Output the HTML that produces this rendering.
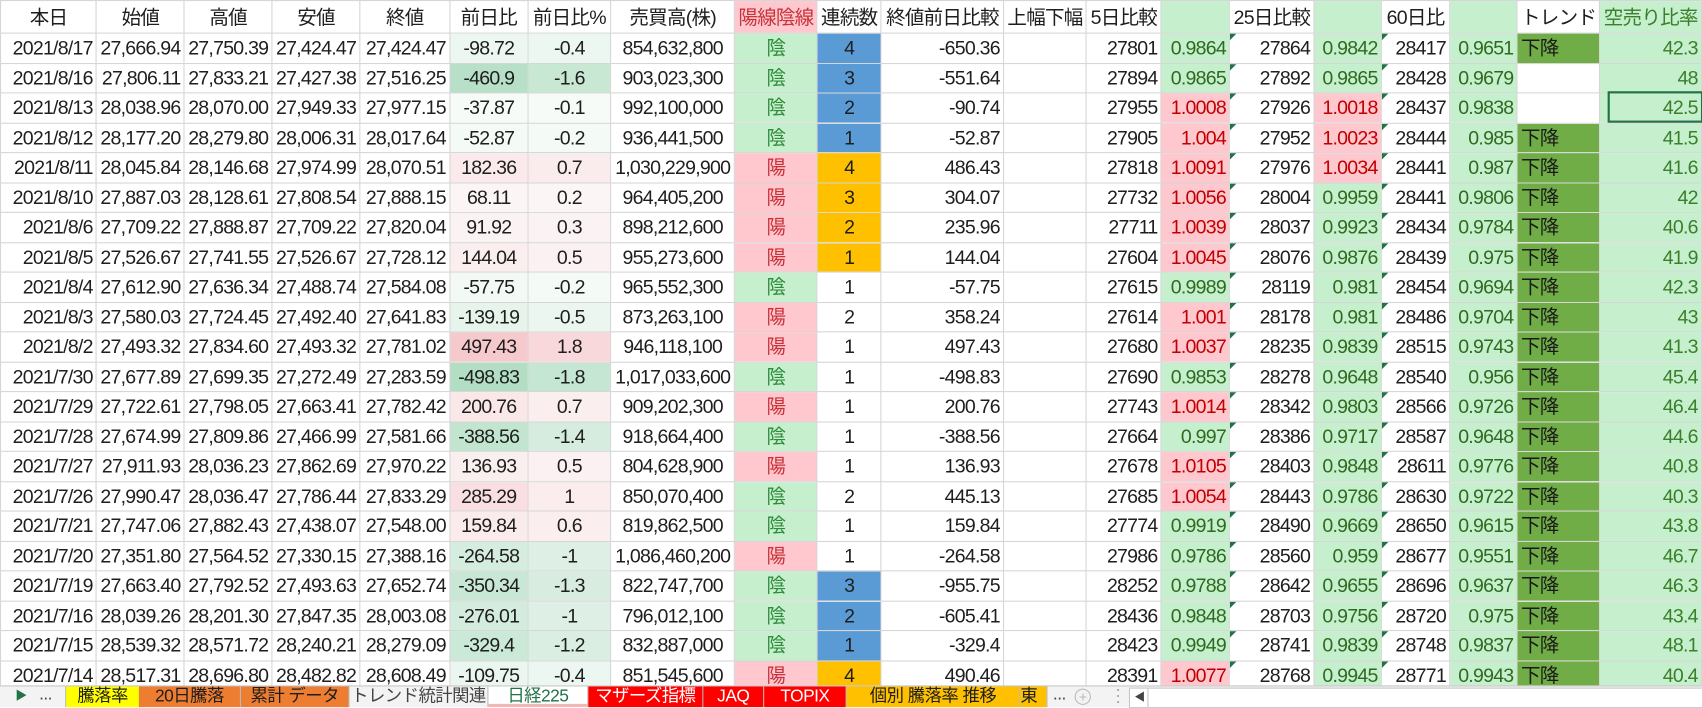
<!DOCTYPE html>
<html><head><meta charset="utf-8">
<style>
html,body{margin:0;padding:0;background:#fff;overflow:hidden;width:1702px;height:706px}
#w{position:absolute;left:0;top:0;width:1568px;height:650px;transform:scale(1.0855,1.0862);transform-origin:0 0;font-family:"Liberation Sans","Noto Sans CJK JP",sans-serif;color:#1e1e1e}
table{border-collapse:collapse;table-layout:fixed;position:absolute;left:0;top:0}
td{border:1px solid #d6d6d6;font-size:18px;letter-spacing:-0.7px;padding:0 3px;white-space:nowrap;overflow:hidden;text-align:right;height:26.5px;line-height:26px;position:relative}
tr.h td{height:29px;text-align:center;font-size:18px}
td.c{text-align:center}
td.l{text-align:left}
.g{background:#c6efce;color:#2f8a3b;text-align:center}
.p{background:#ffc7ce;color:#c8323a;text-align:center}
.b{background:#5b9bd5;text-align:center}
.o{background:#ffc000;text-align:center}
.lg{background:#c6efce;color:#2e6b1f}
.pk{background:#ffc7ce;color:#c00000}
.t{background:#70ad47;text-align:left;color:#1a1a1a}
.k{background:#c6efce;color:#3a7f2a}
.tr::before{content:"";position:absolute;left:0;top:0;border-top:6px solid #217346;border-right:6px solid transparent}
#sel{position:absolute;left:1481px;top:84px;width:84px;height:25px;border:2px solid #217346}
#tabs{position:absolute;left:0;top:631px;width:1568px;height:19px;background:#f3f3f3;border-top:1px solid #c6c6c6;font-size:16px;line-height:19px;letter-spacing:-0.5px}
.tb{position:absolute;top:0;height:19px;text-align:center;border-right:1px solid #bdbdbd;white-space:nowrap;overflow:hidden}
</style></head><body><div id="w">
<table>
<colgroup><col style="width:97px"><col style="width:81px"><col style="width:81px"><col style="width:81px"><col style="width:85px"><col style="width:82px"><col style="width:79px"><col style="width:115px"><col style="width:72px"><col style="width:52px"><col style="width:115px"><col style="width:71px"><col style="width:70px"><col style="width:69px"><col style="width:70px"><col style="width:67px"><col style="width:66px"><col style="width:67px"><col style="width:62px"><col style="width:86px"></colgroup>
<tr class="h"><td>本日</td><td>始値</td><td>高値</td><td>安値</td><td>終値</td><td>前日比</td><td>前日比%</td><td>売買高(株)</td><td style="background:#ffc7ce;color:#c8323a">陽線陰線</td><td>連続数</td><td class="l">終値前日比較</td><td class="l">上幅下幅</td><td class="l">5日比較</td><td style="background:#c6efce"></td><td class="l">25日比較</td><td style="background:#c6efce"></td><td class="l">60日比</td><td style="background:#c6efce"></td><td class="l">トレンド</td><td class="l" style="background:#c6efce;color:#3a7f2a">空売り比率</td></tr>
<tr><td>2021/8/17</td><td>27,666.94</td><td>27,750.39</td><td>27,424.47</td><td>27,424.47</td><td class="c" style="background:rgb(237,247,241)">-98.72</td><td class="c" style="background:rgb(237,247,241)">-0.4</td><td class="c">854,632,800</td><td class="g">陰</td><td class="b">4</td><td>-650.36</td><td></td><td>27801</td><td class="lg">0.9864</td><td class="tr">27864</td><td class="lg">0.9842</td><td class="tr">28417</td><td class="lg">0.9651</td><td class="t">下降</td><td class="k">42.3</td></tr>
<tr><td>2021/8/16</td><td>27,806.11</td><td>27,833.21</td><td>27,427.38</td><td>27,516.25</td><td class="c" style="background:rgb(184,224,200)">-460.9</td><td class="c" style="background:rgb(200,232,212)">-1.6</td><td class="c">903,023,300</td><td class="g">陰</td><td class="b">3</td><td>-551.64</td><td></td><td>27894</td><td class="lg">0.9865</td><td class="tr">27892</td><td class="lg">0.9865</td><td class="tr">28428</td><td class="lg">0.9679</td><td></td><td class="k">48</td></tr>
<tr><td>2021/8/13</td><td>28,038.96</td><td>28,070.00</td><td>27,949.33</td><td>27,977.15</td><td class="c" style="background:rgb(246,251,248)">-37.87</td><td class="c" style="background:rgb(246,251,248)">-0.1</td><td class="c">992,100,000</td><td class="g">陰</td><td class="b">2</td><td>-90.74</td><td></td><td>27955</td><td class="pk">1.0008</td><td class="tr">27926</td><td class="pk">1.0018</td><td class="tr">28437</td><td class="lg">0.9838</td><td></td><td class="k">42.5</td></tr>
<tr><td>2021/8/12</td><td>28,177.20</td><td>28,279.80</td><td>28,006.31</td><td>28,017.64</td><td class="c" style="background:rgb(244,250,246)">-52.87</td><td class="c" style="background:rgb(244,250,246)">-0.2</td><td class="c">936,441,500</td><td class="g">陰</td><td class="b">1</td><td>-52.87</td><td></td><td>27905</td><td class="pk">1.004</td><td class="tr">27952</td><td class="pk">1.0023</td><td class="tr">28444</td><td class="lg">0.985</td><td class="t">下降</td><td class="k">41.5</td></tr>
<tr><td>2021/8/11</td><td>28,045.84</td><td>28,146.68</td><td>27,974.99</td><td>28,070.51</td><td class="c" style="background:rgb(250,234,235)">182.36</td><td class="c" style="background:rgb(250,236,237)">0.7</td><td class="c">1,030,229,900</td><td class="p">陽</td><td class="o">4</td><td>486.43</td><td></td><td>27818</td><td class="pk">1.0091</td><td class="tr">27976</td><td class="pk">1.0034</td><td class="tr">28441</td><td class="lg">0.987</td><td class="t">下降</td><td class="k">41.6</td></tr>
<tr><td>2021/8/10</td><td>27,887.03</td><td>28,128.61</td><td>27,808.54</td><td>27,888.15</td><td class="c" style="background:rgb(251,246,245)">68.11</td><td class="c" style="background:rgb(251,246,245)">0.2</td><td class="c">964,405,200</td><td class="p">陽</td><td class="o">3</td><td>304.07</td><td></td><td>27732</td><td class="pk">1.0056</td><td class="tr">28004</td><td class="lg">0.9959</td><td class="tr">28441</td><td class="lg">0.9806</td><td class="t">下降</td><td class="k">42</td></tr>
<tr><td>2021/8/6</td><td>27,709.22</td><td>27,888.87</td><td>27,709.22</td><td>27,820.04</td><td class="c" style="background:rgb(251,243,243)">91.92</td><td class="c" style="background:rgb(251,243,243)">0.3</td><td class="c">898,212,600</td><td class="p">陽</td><td class="o">2</td><td>235.96</td><td></td><td>27711</td><td class="pk">1.0039</td><td class="tr">28037</td><td class="lg">0.9923</td><td class="tr">28434</td><td class="lg">0.9784</td><td class="t">下降</td><td class="k">40.6</td></tr>
<tr><td>2021/8/5</td><td>27,526.67</td><td>27,741.55</td><td>27,526.67</td><td>27,728.12</td><td class="c" style="background:rgb(250,238,238)">144.04</td><td class="c" style="background:rgb(251,241,242)">0.5</td><td class="c">955,273,600</td><td class="p">陽</td><td class="o">1</td><td>144.04</td><td></td><td>27604</td><td class="pk">1.0045</td><td class="tr">28076</td><td class="lg">0.9876</td><td class="tr">28439</td><td class="lg">0.975</td><td class="t">下降</td><td class="k">41.9</td></tr>
<tr><td>2021/8/4</td><td>27,612.90</td><td>27,636.34</td><td>27,488.74</td><td>27,584.08</td><td class="c" style="background:rgb(243,249,245)">-57.75</td><td class="c" style="background:rgb(244,250,246)">-0.2</td><td class="c">965,552,300</td><td class="g">陰</td><td class="c">1</td><td>-57.75</td><td></td><td>27615</td><td class="lg">0.9989</td><td class="tr">28119</td><td class="lg">0.981</td><td class="tr">28454</td><td class="lg">0.9694</td><td class="t">下降</td><td class="k">42.3</td></tr>
<tr><td>2021/8/3</td><td>27,580.03</td><td>27,724.45</td><td>27,492.40</td><td>27,641.83</td><td class="c" style="background:rgb(231,244,236)">-139.19</td><td class="c" style="background:rgb(236,246,240)">-0.5</td><td class="c">873,263,100</td><td class="p">陽</td><td class="c">2</td><td>358.24</td><td></td><td>27614</td><td class="pk">1.001</td><td class="tr">28178</td><td class="lg">0.981</td><td class="tr">28486</td><td class="lg">0.9704</td><td class="t">下降</td><td class="k">43</td></tr>
<tr><td>2021/8/2</td><td>27,493.32</td><td>27,834.60</td><td>27,493.32</td><td>27,781.02</td><td class="c" style="background:rgb(246,201,204)">497.43</td><td class="c" style="background:rgb(249,216,219)">1.8</td><td class="c">946,118,100</td><td class="p">陽</td><td class="c">1</td><td>497.43</td><td></td><td>27680</td><td class="pk">1.0037</td><td class="tr">28235</td><td class="lg">0.9839</td><td class="tr">28515</td><td class="lg">0.9743</td><td class="t">下降</td><td class="k">41.3</td></tr>
<tr><td>2021/7/30</td><td>27,677.89</td><td>27,699.35</td><td>27,272.49</td><td>27,283.59</td><td class="c" style="background:rgb(178,222,196)">-498.83</td><td class="c" style="background:rgb(196,230,210)">-1.8</td><td class="c">1,017,033,600</td><td class="g">陰</td><td class="c">1</td><td>-498.83</td><td></td><td>27690</td><td class="lg">0.9853</td><td class="tr">28278</td><td class="lg">0.9648</td><td class="tr">28540</td><td class="lg">0.956</td><td class="t">下降</td><td class="k">45.4</td></tr>
<tr><td>2021/7/29</td><td>27,722.61</td><td>27,798.05</td><td>27,663.41</td><td>27,782.42</td><td class="c" style="background:rgb(250,232,233)">200.76</td><td class="c" style="background:rgb(251,238,239)">0.7</td><td class="c">909,202,300</td><td class="p">陽</td><td class="c">1</td><td>200.76</td><td></td><td>27743</td><td class="pk">1.0014</td><td class="tr">28342</td><td class="lg">0.9803</td><td class="tr">28566</td><td class="lg">0.9726</td><td class="t">下降</td><td class="k">46.4</td></tr>
<tr><td>2021/7/28</td><td>27,674.99</td><td>27,809.86</td><td>27,466.99</td><td>27,581.66</td><td class="c" style="background:rgb(194,229,208)">-388.56</td><td class="c" style="background:rgb(214,236,222)">-1.4</td><td class="c">918,664,400</td><td class="g">陰</td><td class="c">1</td><td>-388.56</td><td></td><td>27664</td><td class="lg">0.997</td><td class="tr">28386</td><td class="lg">0.9717</td><td class="tr">28587</td><td class="lg">0.9648</td><td class="t">下降</td><td class="k">44.6</td></tr>
<tr><td>2021/7/27</td><td>27,911.93</td><td>28,036.23</td><td>27,862.69</td><td>27,970.22</td><td class="c" style="background:rgb(250,239,239)">136.93</td><td class="c" style="background:rgb(251,241,242)">0.5</td><td class="c">804,628,900</td><td class="p">陽</td><td class="c">1</td><td>136.93</td><td></td><td>27678</td><td class="pk">1.0105</td><td class="tr">28403</td><td class="lg">0.9848</td><td class="tr">28611</td><td class="lg">0.9776</td><td class="t">下降</td><td class="k">40.8</td></tr>
<tr><td>2021/7/26</td><td>27,990.47</td><td>28,036.47</td><td>27,786.44</td><td>27,833.29</td><td class="c" style="background:rgb(249,223,225)">285.29</td><td class="c" style="background:rgb(251,236,237)">1</td><td class="c">850,070,400</td><td class="g">陰</td><td class="c">2</td><td>445.13</td><td></td><td>27685</td><td class="pk">1.0054</td><td class="tr">28443</td><td class="lg">0.9786</td><td class="tr">28630</td><td class="lg">0.9722</td><td class="t">下降</td><td class="k">40.3</td></tr>
<tr><td>2021/7/21</td><td>27,747.06</td><td>27,882.43</td><td>27,438.07</td><td>27,548.00</td><td class="c" style="background:rgb(250,236,237)">159.84</td><td class="c" style="background:rgb(251,238,239)">0.6</td><td class="c">819,862,500</td><td class="g">陰</td><td class="c">1</td><td>159.84</td><td></td><td>27774</td><td class="lg">0.9919</td><td class="tr">28490</td><td class="lg">0.9669</td><td class="tr">28650</td><td class="lg">0.9615</td><td class="t">下降</td><td class="k">43.8</td></tr>
<tr><td>2021/7/20</td><td>27,351.80</td><td>27,564.52</td><td>27,330.15</td><td>27,388.16</td><td class="c" style="background:rgb(213,237,222)">-264.58</td><td class="c" style="background:rgb(222,240,229)">-1</td><td class="c">1,086,460,200</td><td class="p">陽</td><td class="c">1</td><td>-264.58</td><td></td><td>27986</td><td class="lg">0.9786</td><td class="tr">28560</td><td class="lg">0.959</td><td class="tr">28677</td><td class="lg">0.9551</td><td class="t">下降</td><td class="k">46.7</td></tr>
<tr><td>2021/7/19</td><td>27,663.40</td><td>27,792.52</td><td>27,493.63</td><td>27,652.74</td><td class="c" style="background:rgb(200,231,213)">-350.34</td><td class="c" style="background:rgb(216,237,224)">-1.3</td><td class="c">822,747,700</td><td class="g">陰</td><td class="b">3</td><td>-955.75</td><td></td><td>28252</td><td class="lg">0.9788</td><td class="tr">28642</td><td class="lg">0.9655</td><td class="tr">28696</td><td class="lg">0.9637</td><td class="t">下降</td><td class="k">46.3</td></tr>
<tr><td>2021/7/16</td><td>28,039.26</td><td>28,201.30</td><td>27,847.35</td><td>28,003.08</td><td class="c" style="background:rgb(211,236,221)">-276.01</td><td class="c" style="background:rgb(222,240,229)">-1</td><td class="c">796,012,100</td><td class="g">陰</td><td class="b">2</td><td>-605.41</td><td></td><td>28436</td><td class="lg">0.9848</td><td class="tr">28703</td><td class="lg">0.9756</td><td class="tr">28720</td><td class="lg">0.975</td><td class="t">下降</td><td class="k">43.4</td></tr>
<tr><td>2021/7/15</td><td>28,539.32</td><td>28,571.72</td><td>28,240.21</td><td>28,279.09</td><td class="c" style="background:rgb(203,233,215)">-329.4</td><td class="c" style="background:rgb(218,238,226)">-1.2</td><td class="c">832,887,000</td><td class="g">陰</td><td class="b">1</td><td>-329.4</td><td></td><td>28423</td><td class="lg">0.9949</td><td class="tr">28741</td><td class="lg">0.9839</td><td class="tr">28748</td><td class="lg">0.9837</td><td class="t">下降</td><td class="k">48.1</td></tr>
<tr><td>2021/7/14</td><td>28,517.31</td><td>28,696.80</td><td>28,482.82</td><td>28,608.49</td><td class="c" style="background:rgb(236,246,240)">-109.75</td><td class="c" style="background:rgb(237,247,241)">-0.4</td><td class="c">851,545,600</td><td class="p">陽</td><td class="o">4</td><td>490.46</td><td></td><td>28391</td><td class="pk">1.0077</td><td class="tr">28768</td><td class="lg">0.9945</td><td class="tr">28771</td><td class="lg">0.9943</td><td class="t">下降</td><td class="k">40.4</td></tr>
</table>
<div id="sel"></div>
<div id="tabs">
<div style="position:absolute;left:14px;top:0;color:#217346;font-size:11px">▶</div>
<div style="position:absolute;left:36px;top:-2px;color:#444">...</div>
<div class="tb" style="left:60px;width:67px;background:#ffff00;border-left:1px solid #bdbdbd">騰落率</div>
<div class="tb" style="left:128px;width:93px;background:#ed7d31">20日騰落</div>
<div class="tb" style="left:222px;width:99px;background:#ed7d31">累計 データ</div>
<div class="tb" style="left:322px;width:127px;color:#444">トレンド統計関連</div>
<div class="tb" style="left:450px;width:91px;background:#fff;color:#217346;box-shadow:inset 0 -3px 0 #f4b6b6">日経225</div>
<div class="tb" style="left:542px;width:105px;background:#ff0000;color:#fff">マザーズ指標</div>
<div class="tb" style="left:648px;width:55px;background:#ff0000;color:#fff">JAQ</div>
<div class="tb" style="left:704px;width:75px;background:#ff0000;color:#fff">TOPIX</div>
<div class="tb" style="left:780px;width:159px;background:#ffc000">個別 騰落率 推移</div>
<div class="tb" style="left:940px;width:24px;background:#ffc000;text-align:left">東</div>
<div style="position:absolute;left:970px;top:-2px;color:#444">...</div>
<div style="position:absolute;left:990px;top:2px;width:13px;height:13px;border:1px solid #bbb;border-radius:50%;color:#bbb;font-size:13px;line-height:13px;text-align:center">+</div>
<div style="position:absolute;left:1022px;top:0;color:#aaa">⋮</div>
<div style="position:absolute;left:1040px;top:1px;width:528px;height:17px;background:#fff;border:1px solid #c6c6c6"><span style="position:absolute;left:4px;top:0;font-size:10px;line-height:17px;color:#444">◀</span><span style="position:absolute;left:16px;top:0;width:1px;height:17px;background:#c6c6c6"></span></div>
</div>
</div></body></html>
